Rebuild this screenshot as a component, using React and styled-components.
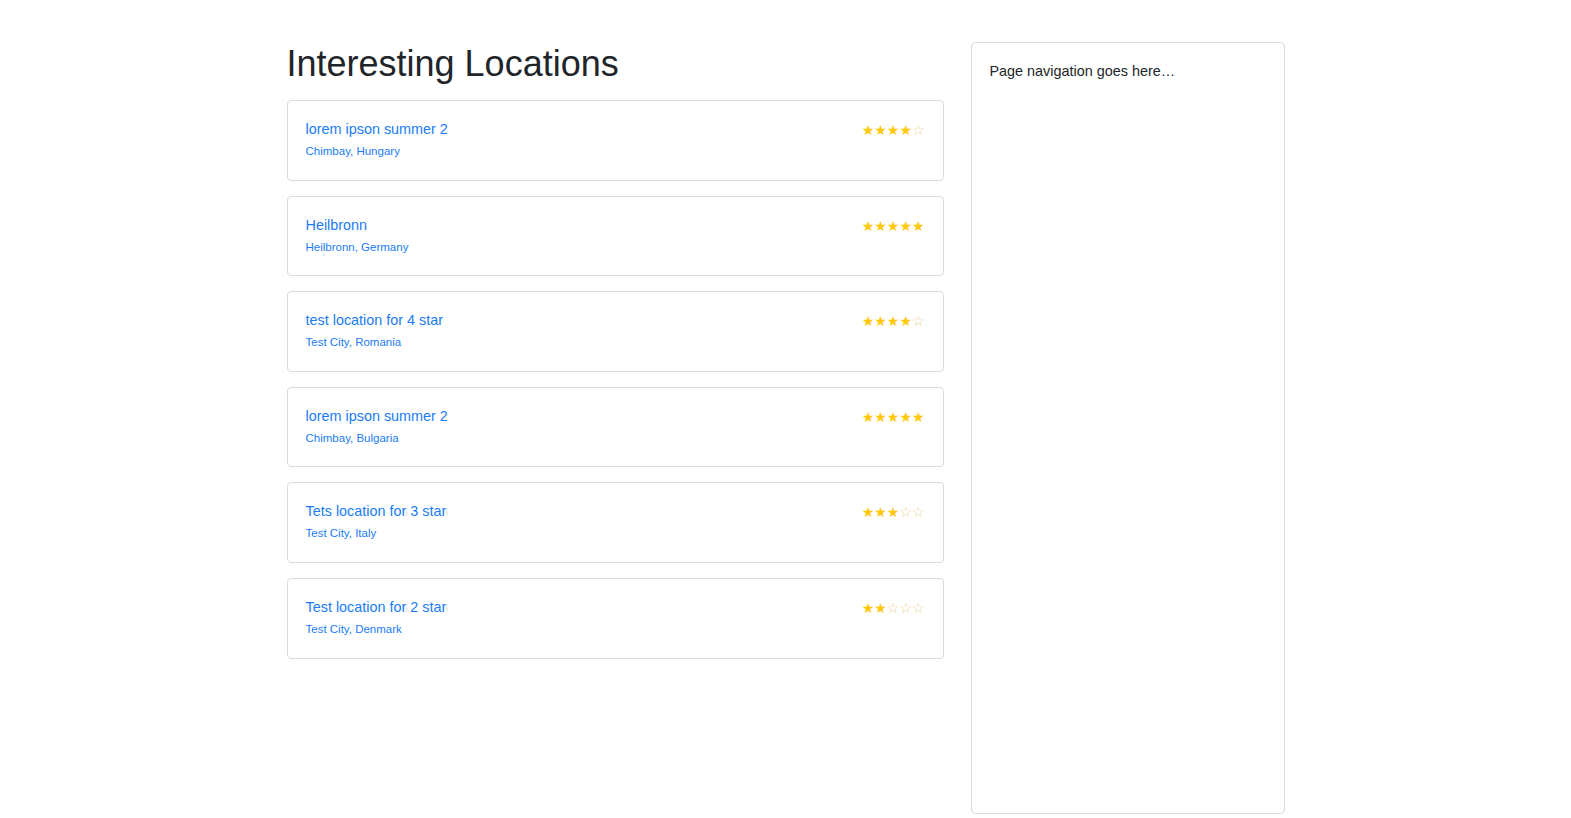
import React from "react";
import styled, { createGlobalStyle } from "styled-components";

const locations = [
  { name: "lorem ipson summer 2", place: "Chimbay, Hungary", rating: 4 },
  { name: "Heilbronn", place: "Heilbronn, Germany", rating: 5 },
  { name: "test location for 4 star", place: "Test City, Romania", rating: 4 },
  { name: "lorem ipson summer 2", place: "Chimbay, Bulgaria", rating: 5 },
  { name: "Tets location for 3 star", place: "Test City, Italy", rating: 3 },
  { name: "Test location for 2 star", place: "Test City, Denmark", rating: 2 },
];

export default function App() {
  return (
    <>
      <GlobalStyle />
      <Page>
        <Main>
          <Heading>Interesting Locations</Heading>
          <List>
            {locations.map((loc, i) => (
              <Card key={i}>
                <Info>
                  <Title href="#">{loc.name}</Title>
                  <Place href="#">{loc.place}</Place>
                </Info>
                <Stars>
                  {[1, 2, 3, 4, 5].map((n) => (
                    <Star key={n} $filled={n <= loc.rating}>
                      {n <= loc.rating ? "★" : "☆"}
                    </Star>
                  ))}
                </Stars>
              </Card>
            ))}
          </List>
        </Main>
        <Sidebar>Page navigation goes here…</Sidebar>
      </Page>
    </>
  );
}

const GlobalStyle = createGlobalStyle`
  body {
    margin: 0;
    background: #fff;
    font-family: "Liberation Sans", Arial, sans-serif;
    color: #212529;
  }
`;

const Page = styled.div`
  width: 998px;
  margin: 0 auto;
  padding-top: 42px;
  display: grid;
  grid-template-columns: 657px 314px;
  column-gap: 27px;
  align-items: start;
`;

const Main = styled.div``;

const Heading = styled.h1`
  margin: 0 0 15px;
  font-size: 36px;
  line-height: 43px;
  font-weight: 400;
  color: #212529;
`;

const List = styled.div`
  display: flex;
  flex-direction: column;
  gap: 15px;
`;

const Card = styled.div`
  display: flex;
  justify-content: space-between;
  align-items: flex-start;
  border: 1px solid #dcdcdc;
  border-radius: 4px;
  padding: 18px 18px 17px 18px;
  height: 80.6px;
  box-sizing: border-box;
`;

const Info = styled.div`
  display: flex;
  flex-direction: column;
`;

const Title = styled.a`
  color: #1a7cf5;
  text-decoration: none;
  font-size: 14.4px;
  line-height: 20px;
  margin-bottom: 3px;
`;

const Place = styled.a`
  color: #1a7cf5;
  text-decoration: none;
  font-size: 11.5px;
  line-height: 18px;
`;

const Stars = styled.div`
  display: flex;
  margin-top: 1px;
  line-height: 20px;
  font-family: "DejaVu Sans", sans-serif;
  font-size: 14px;
`;

const Star = styled.span`
  color: ${(p) => (p.$filled ? "#ffc80a" : "#ecd08c")};
`;

const Sidebar = styled.div`
  height: 771.5px;
  box-sizing: border-box;
  border: 1px solid #dcdcdc;
  border-radius: 4px;
  padding: 18px 18px;
  font-size: 14.4px;
  line-height: 20px;
  color: #212529;
`;
